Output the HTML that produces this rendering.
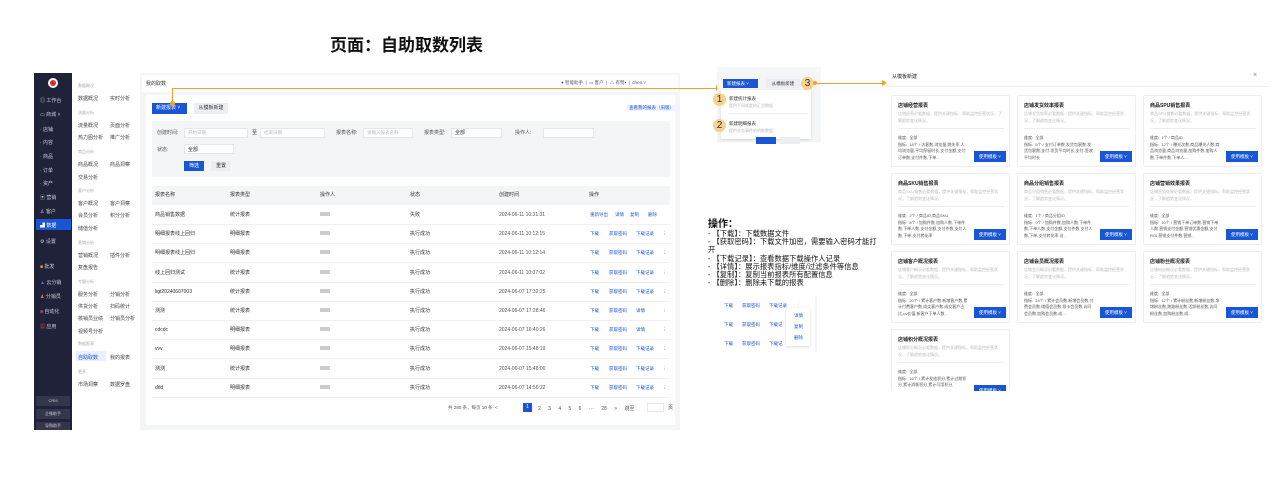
<!DOCTYPE html><html><head><meta charset="utf-8"><style>
*{margin:0;padding:0;box-sizing:border-box}
html,body{width:1280px;height:491px;overflow:hidden}
body{background:#fff;position:relative;font-family:"Liberation Sans","Noto Sans CJK SC",sans-serif;color:#333}
.a{position:absolute;white-space:nowrap}
.t5{font-size:5px;line-height:6px}
.side{left:34px;top:73px;width:38px;height:357px;background:#20223a}
.si{color:#c9cbd6;font-size:5px;left:40px}
.nav{left:72px;top:73px;width:68px;height:357px;background:#fff}
.nh{color:#aaa;font-size:4px}
.ni{color:#444;font-size:5px}
.main{left:140px;top:73px;width:540px;height:357px;background:#f4f5f7}
.blue{background:#1856d6;color:#fff}
.gray{background:#eceef1;color:#333}
.inp{background:#fff;border:1px solid #e6e7ea;height:10px}
.lk{color:#1856d6;font-size:4.5px}
.card{width:119px;height:72px;background:#fff;border:1px solid #eceef1;border-radius:2px;overflow:hidden}
.ct{font-size:5px;font-weight:bold;color:#222;left:6px;top:6px}
.cd{font-size:4px;color:#bbb;left:6px;top:15px;line-height:6.5px;white-space:normal;width:106px}
.cl{left:6px;top:32px;width:106px;height:1px;background:#eee}
.cm{font-size:4px;color:#555;left:6px;top:39px;line-height:6.5px;white-space:normal;width:70px}
.ub{left:82px;top:55px;width:32px;height:11px;background:#1856d6;color:#fff;font-size:4.5px;line-height:11px;text-align:center}
.or{background:#f0a030}
.circ{width:13px;height:13px;border-radius:50%;background:#f6d28e;color:#333;font-size:10px;line-height:13px;text-align:center}
</style></head><body>
<div class="a" style="left:330px;top:31px;font-size:17px;font-weight:bold;color:#111">页面：自助取数列表</div>

<div class="a side"></div>
<div class="a" style="left:48px;top:78px;width:10px;height:10px;border-radius:50%;background:#fff"></div>
<div class="a" style="left:50px;top:80px;width:6px;height:6px;border-radius:50%;background:#e02a2a"></div>
<div class="a si" style="top:97px">◎ 工作台</div>
<div class="a si" style="top:111px">▭ 商城 ˄</div>
<div class="a si" style="top:126px">· 店铺</div>
<div class="a si" style="top:139px">· 内容</div>
<div class="a si" style="top:153px">· 商品</div>
<div class="a si" style="top:167px">· 订单</div>
<div class="a si" style="top:180px">· 资产</div>
<div class="a si" style="top:194px">▣ 营销</div>
<div class="a si" style="top:208px">♙ 客户</div>
<div class="a" style="left:36px;top:219px;width:35px;height:11px;background:#1856d6"></div>
<div class="a si" style="top:222px;color:#fff">▟ 数据</div>
<div class="a si" style="top:238px">⚙ 设置</div>
<div class="a si" style="top:263px"><span style="color:#e8a030">■</span> 批发</div>
<div class="a si" style="top:279px"><span style="color:#3a7cf0">▲</span> 云分销</div>
<div class="a si" style="top:293px"><span style="color:#e86a20">♟</span> 分销员</div>
<div class="a si" style="top:308px"><span style="color:#d03a8a">■</span> 自动化</div>
<div class="a si" style="top:323px"><span style="color:#e05a30">▦</span> 应用</div>
<div class="a" style="left:36px;top:396px;width:34px;height:10px;background:#34364d;color:#ccc;font-size:4px;line-height:10px;text-align:center">CRM</div>
<div class="a" style="left:36px;top:409px;width:34px;height:10px;background:#34364d;color:#ccc;font-size:4px;line-height:10px;text-align:center">企微助手</div>
<div class="a" style="left:36px;top:422px;width:34px;height:8px;background:#34364d;color:#ccc;font-size:4px;line-height:8px;text-align:center">导购助手</div>

<div class="a nav"></div>
<div class="a nh" style="left:78px;top:83px">数据概况</div>
<div class="a ni" style="left:78px;top:95px">数据概况</div><div class="a ni" style="left:110px;top:95px">实时分析</div>
<div class="a nh" style="left:78px;top:110px">流量分析</div>
<div class="a ni" style="left:78px;top:122px">流量概况</div><div class="a ni" style="left:110px;top:122px">页面分析</div>
<div class="a ni" style="left:78px;top:134px">热力图分析</div><div class="a ni" style="left:110px;top:134px">推广分析</div>
<div class="a nh" style="left:78px;top:149px">商品分析</div>
<div class="a ni" style="left:78px;top:161px">商品概况</div><div class="a ni" style="left:110px;top:161px">商品洞察</div>
<div class="a ni" style="left:78px;top:174px">交易分析</div>
<div class="a nh" style="left:78px;top:188px">客户分析</div>
<div class="a ni" style="left:78px;top:200px">客户概况</div><div class="a ni" style="left:110px;top:200px">客户洞察</div>
<div class="a ni" style="left:78px;top:212px">会员分析</div><div class="a ni" style="left:110px;top:212px">积分分析</div>
<div class="a ni" style="left:78px;top:225px">储值分析</div>
<div class="a nh" style="left:78px;top:240px">营销分析</div>
<div class="a ni" style="left:78px;top:252px">营销概况</div><div class="a ni" style="left:110px;top:252px">插件分析</div>
<div class="a ni" style="left:78px;top:264px">复盘报告</div>
<div class="a nh" style="left:78px;top:279px">专题分析</div>
<div class="a ni" style="left:78px;top:291px">服务分析</div><div class="a ni" style="left:110px;top:291px">分销分析</div>
<div class="a ni" style="left:78px;top:303px">供货分析</div><div class="a ni" style="left:110px;top:303px">扫码统计</div>
<div class="a ni" style="left:78px;top:315px">核销员业绩</div><div class="a ni" style="left:110px;top:315px">分销员分析</div>
<div class="a ni" style="left:78px;top:328px">视频号分析</div>
<div class="a nh" style="left:78px;top:341px">数据报表</div>
<div class="a" style="left:76px;top:351px;width:30px;height:10px;background:#e8efff"></div>
<div class="a ni" style="left:78px;top:354px;color:#1856d6">自助取数</div><div class="a ni" style="left:110px;top:354px">我的报表</div>
<div class="a nh" style="left:78px;top:369px">更多</div>
<div class="a ni" style="left:78px;top:381px">市场洞察</div><div class="a ni" style="left:110px;top:381px">数据罗盘</div>

<div class="a main"></div>
<div class="a" style="left:142px;top:75px;width:536px;height:17px;background:#fff"></div>
<div class="a t5" style="left:146px;top:81px;color:#333">我的取数</div>
<div class="a" style="left:561px;top:80px;font-size:4.5px;color:#555">● 智能助手 &nbsp;|&nbsp; ▭ 客户 &nbsp;|&nbsp; △ 有赞<span style="color:red">•</span> &nbsp;|&nbsp; chen ˅</div>
<div class="a" style="left:146px;top:95px;width:529px;height:330px;background:#fff"></div>
<div class="a blue" style="left:152px;top:103px;width:35px;height:11px;font-size:5px;line-height:11px;padding-left:4px">新建报表 ˅</div>
<div class="a gray" style="left:194px;top:103px;width:34px;height:11px;font-size:5px;line-height:11px;text-align:center">从模板新建</div>
<div class="a lk" style="left:627px;top:105px;background:#eef3ff;padding:0 2px">查看我的报表（旧版）</div>
<div class="a" style="left:152px;top:121px;width:518px;height:56px;background:#f4f5f7"></div>
<div class="a t5" style="left:157px;top:130px;color:#555">创建时间:</div>
<div class="a inp" style="left:184px;top:128px;width:64px"></div><div class="a" style="left:188px;top:130px;font-size:4.5px;color:#bbb">开始日期</div>
<div class="a t5" style="left:252px;top:130px">至</div>
<div class="a inp" style="left:260px;top:128px;width:65px"></div><div class="a" style="left:264px;top:130px;font-size:4.5px;color:#bbb">结束日期</div>
<div class="a t5" style="left:336px;top:130px;color:#555">报表名称:</div>
<div class="a inp" style="left:363px;top:128px;width:50px"></div><div class="a" style="left:367px;top:130px;font-size:4.5px;color:#bbb">请输入报表名称</div>
<div class="a t5" style="left:424px;top:130px;color:#555">报表类型:</div>
<div class="a inp" style="left:451px;top:128px;width:51px"></div><div class="a t5" style="left:455px;top:130px">全部</div>
<div class="a t5" style="left:515px;top:130px;color:#555">操作人:</div>
<div class="a inp" style="left:543px;top:128px;width:51px"></div>
<div class="a t5" style="left:157px;top:147px;color:#555">状态:</div>
<div class="a inp" style="left:184px;top:144px;width:50px"></div><div class="a t5" style="left:188px;top:147px">全部</div>
<div class="a blue" style="left:184px;top:161px;width:20px;height:10px;font-size:5px;line-height:10px;text-align:center">筛选</div>
<div class="a gray" style="left:211px;top:161px;width:20px;height:10px;font-size:5px;line-height:10px;text-align:center">重置</div>

<div class="a" style="left:152px;top:186px;width:518px;height:19px;background:#f4f5f7"></div>
<div id="tbl"></div>
<div class="a" style="left:448px;top:405px;font-size:4.5px;color:#555">共 280 条，每页 10 条 &nbsp;&lt;</div>
<div class="a blue" style="left:523px;top:403px;width:9px;height:9px;font-size:5px;line-height:9px;text-align:center">1</div>
<div class="a" style="left:538px;top:405px;font-size:5px;color:#555;word-spacing:6px">2 3 4 5 6 ··· 28 &gt; 跳至</div>
<div class="a inp" style="left:647px;top:403px;width:17px;height:9px"></div>
<div class="a t5" style="left:668px;top:405px">页</div>

<div class="a or" style="left:172px;top:89px;width:1px;height:14px"></div>
<div class="a or" style="left:172px;top:88px;width:548px;height:1px"></div>
<div class="a" style="left:170px;top:101px;width:5px;height:5px;border-radius:50%;background:#f0a030"></div>
<div class="a" style="left:716px;top:85px;width:0;height:0;border-left:5px solid #f0a030;border-top:3px solid transparent;border-bottom:3px solid transparent"></div>

<div class="a" style="left:717px;top:67px;width:104px;height:75px;background:#f4f5f7"></div>
<div class="a" style="left:717px;top:67px;width:104px;height:5px;background:#f7f8fa"></div>
<div class="a blue" style="left:723px;top:79px;width:35px;height:9px;font-size:4.5px;line-height:9px;padding-left:4px">新建报表 ˅</div>
<div class="a gray" style="left:766px;top:79px;width:34px;height:9px;font-size:4.5px;line-height:9px;text-align:center">从模板新建</div>
<div class="a circ" style="left:801px;top:77px">3</div>
<div class="a or" style="left:814px;top:83px;width:70px;height:1px"></div>
<div class="a" style="left:813px;top:81px;width:4px;height:4px;border-radius:50%;background:#f0a030"></div>
<div class="a" style="left:882px;top:80px;border-left:5px solid #f0a030;border-top:3px solid transparent;border-bottom:3px solid transparent"></div>
<div class="a" style="left:721px;top:90px;width:90px;height:49px;background:#fff;box-shadow:0 1px 3px rgba(0,0,0,.12)"></div>
<div class="a" style="left:756px;top:137px;width:20px;height:7px;background:#1856d6"></div>
<div class="a" style="left:780px;top:137px;width:20px;height:7px;background:#eceef1"></div>
<div class="a circ" style="left:713px;top:93px">1</div>
<div class="a" style="left:729px;top:96px;font-size:4.5px">新建统计报表</div>
<div class="a" style="left:729px;top:103px;font-size:4px;color:#bbb">提供不同维度的汇总数据</div>
<div class="a" style="left:728px;top:113px;width:80px;height:1px;background:#eee"></div>
<div class="a circ" style="left:713px;top:119px">2</div>
<div class="a" style="left:729px;top:121px;font-size:4.5px">新建明细报表</div>
<div class="a" style="left:729px;top:128px;font-size:4px;color:#bbb">提供业务事件的明细数据</div>

<div class="a" style="left:892px;top:73px;font-size:5px;color:#222">从模板新建</div>
<div class="a" style="left:1253px;top:72px;font-size:7px;color:#888">×</div>
<div class="a" style="left:888px;top:86px;width:382px;height:1px;background:#eee"></div>
<div id="cards"></div>

<div class="a" style="left:708px;top:219px;font-size:10px;line-height:11px;font-weight:bold;color:#111">操作：</div>
<div class="a" style="left:708px;top:230px;font-size:7.3px;line-height:8.2px;color:#111;white-space:normal;width:172px">- 【下载】：下载数据文件<br>- 【获取密码】：下载文件加密，需要输入密码才能打<br>开<br>- 【下载记录】：查看数据下载操作人记录<br>- 【详情】：展示报表指标/维度/过滤条件等信息<br>- 【复制】：复制当前报表所有配置信息<br>- 【删除】：删除未下载的报表</div>
<div class="a" style="left:712px;top:296px;width:105px;height:57px;background:#fff;border-right:2px solid #f4f5f7"></div>
<div class="a lk" style="left:724px;top:303px">下载</div><div class="a lk" style="left:742px;top:303px">获取密码</div><div class="a lk" style="left:769px;top:303px">下载记录</div><div class="a" style="left:796px;top:302px;font-size:5px;color:#aaa">⋮</div>
<div class="a lk" style="left:724px;top:322px">下载</div><div class="a lk" style="left:742px;top:322px">获取密码</div><div class="a lk" style="left:769px;top:322px">下载记</div>
<div class="a lk" style="left:724px;top:341px">下载</div><div class="a lk" style="left:742px;top:341px">获取密码</div><div class="a lk" style="left:769px;top:341px">下载记</div>
<div class="a" style="left:786px;top:308px;width:24px;height:38px;background:#fff;box-shadow:0 1px 3px rgba(0,0,0,.15)"></div>
<div class="a lk" style="left:794px;top:313px">详情</div><div class="a lk" style="left:794px;top:324px">复制</div><div class="a lk" style="left:794px;top:335px">删除</div>

<script>
var rows=[["商品销售数据","统计报表","失败","2024-06-11 10:31:31",["重新导出","详情","复制","删除"]],
["明细报表线上回归","明细报表","执行成功","2024-06-11 10:12:15",0],
["明细报表线上回归","明细报表","执行成功","2024-06-11 10:12:14",0],
["线上回归测试","统计报表","执行成功","2024-06-11 10:07:02",0],
["ligt20240607003","统计报表","执行成功","2024-06-07 17:32:25",0],
["测测","统计报表","执行成功","2024-06-07 17:28:46",1],
["cdcdc","明细报表","执行成功","2024-06-07 16:40:26",1],
["vvv","明细报表","执行成功","2024-06-07 15:48:19",0],
["测测","统计报表","执行成功","2024-06-07 15:48:00",0],
["ddd","明细报表","执行成功","2024-06-07 14:56:22",0]];
var h='';
var hd=["报表名称","报表类型","操作人","状态","创建时间","操作"],xs=[155,230,320,410,499,589];
hd.forEach(function(t,i){h+='<div class="a t5" style="left:'+xs[i]+'px;top:192px;color:#333">'+t+'</div>'});
rows.forEach(function(r,i){var y=205+i*19.2;
h+='<div class="a" style="left:152px;top:'+(y+19)+'px;width:518px;height:1px;background:#f0f0f0"></div>';
h+='<div class="a t5" style="left:155px;top:'+(y+7)+'px">'+r[0]+'</div><div class="a t5" style="left:230px;top:'+(y+7)+'px">'+r[1]+'</div>';
h+='<div class="a" style="left:320px;top:'+(y+7)+'px;width:10px;height:4px;background:#ccc"></div>';
h+='<div class="a t5" style="left:410px;top:'+(y+7)+'px">'+r[2]+'</div><div class="a t5" style="left:499px;top:'+(y+7)+'px;color:#555">'+r[3]+'</div>';
var ops=r[4]===0?["下载","获取密码","下载记录","⋮"]:r[4]===1?["下载","获取密码","详情","⋮"]:r[4];
var ox=[590,609,636,662];if(r[4]!==0&&r[4]!==1)ox=[590,615,630,648];
ops.forEach(function(o,j){h+='<div class="a lk" style="left:'+ox[j]+'px;top:'+(y+7)+'px">'+o+'</div>'});});
document.getElementById('tbl').innerHTML=h;
var cs=[["店铺经营报表","全部","18个 / 访客数,浏览量,跳失率,人均浏览量,平均停留时长,支付金额,支付订单数,支付件数,下单..."],
["店铺发货效率报表","全部","5个 / 支付订单数,发货包裹数,发货包裹数,支付-发货平均时长,支付-签收平均时长"],
["商品SPU销售报表","1个 / 商品ID","12个 / 曝光次数,商品曝光人数,商品浏览量,商品浏览量,加购件数,加购人数,下单件数,下单人..."],
["商品SKU销售报表","2个 / 商品ID,商品SKU","8个 / 加购件数,加购人数,下单件数,下单人数,支付金额,支付件数,支付人数,下单-支付转化率"],
["商品分组销售报表","1个 / 商品分组ID","9个 / 加购件数,加购人数,下单件数,下单人数,支付金额,支付件数,支付人数,下单-支付转化率,访..."],
["店铺营销效果报表","全部","10个 / 营销下单订单数,营销下单人数,营销支付金额,营销优惠金额,支付ROI,营销支付件数,营销..."],
["店铺客户概况报表","全部","20个 / 累计客户数,新增客户数,累计付费客户数,成交客户数,成交客户占比,uv价值,新客户下单人数..."],
["店铺会员概况报表","全部","24个 / 累计会员数,新增会员数,付费会员数,储值会员数,领卡会员数,访问会员数,加购会员数,成..."],
["店铺粉丝概况报表","全部","12个 / 累计粉丝数,新增粉丝数,净增粉丝数,跑路粉丝数,活跃粉丝数,访问粉丝数,加购粉丝数,成..."],
["店铺积分概况报表","全部","16个 / 累计发放积分,累计过期积分,累计消耗积分,累计可用积分,"]];
var c='';cs.forEach(function(d,i){var x=891+(i%3)*126,y=95+Math.floor(i/3)*78;
c+='<div class="a card" style="left:'+x+'px;top:'+y+'px;'+(i==9?'height:62px;border-bottom:none;':'')+'"><div class="a ct">'+d[0]+'</div><div class="a cd">'+d[0].replace("报表","")+'必看数据，提供关键指标，帮助监控经营状况，了解趋势变化情况。</div><div class="a cl"></div><div class="a cm">维度: &nbsp;'+d[1]+'<br>指标: &nbsp;'+d[2]+'</div><div class="a ub">使用模板 ˅</div></div>';});
document.getElementById('cards').innerHTML=c;
</script>
</body></html>
